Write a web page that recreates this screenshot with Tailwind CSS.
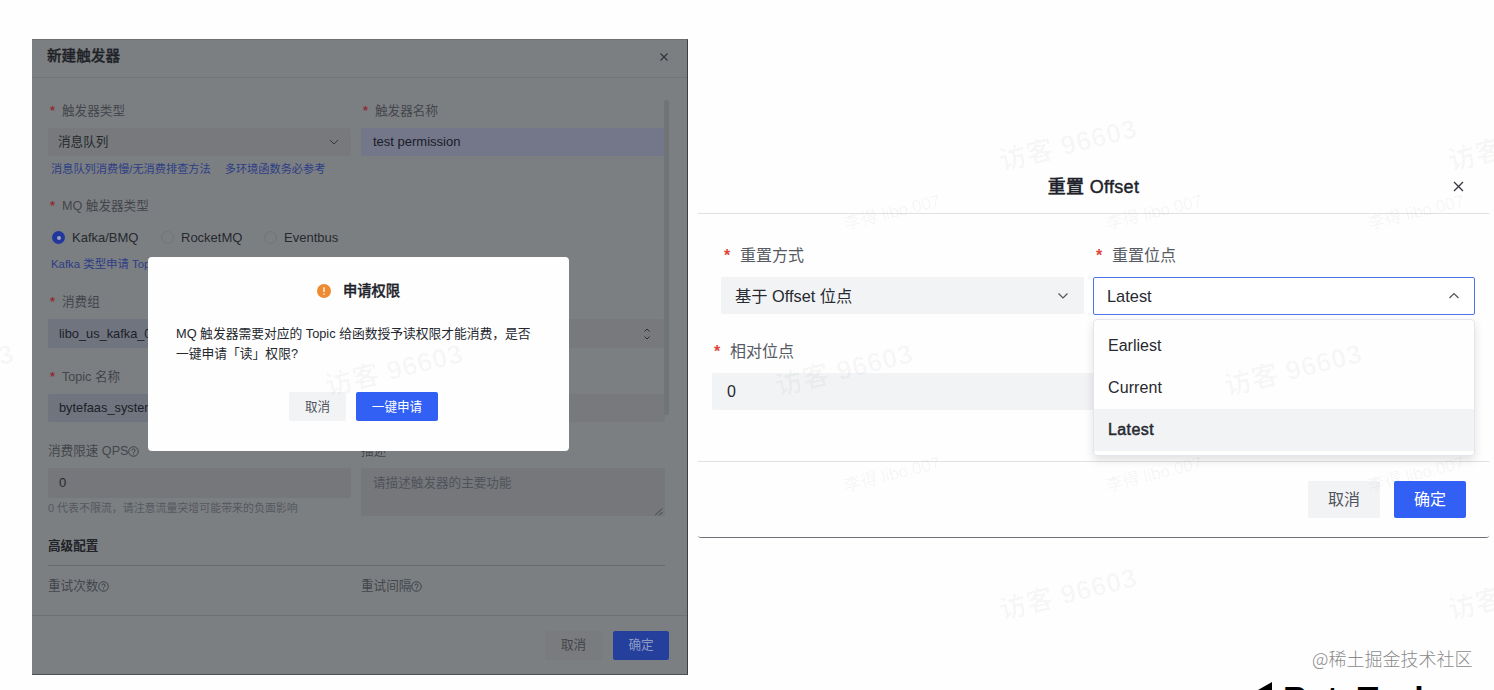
<!DOCTYPE html>
<html lang="zh">
<head>
    <meta charset="UTF-8">
    <meta name="viewport" content="width=device-width, initial-scale=1.0">
    <title>触发器配置</title>
    <script src="https://cdn.jsdelivr.net/npm/@tailwindcss/browser@4"></script>
</head>
<body class="bg-[#fefefe] font-['Liberation_Sans','Noto_Sans_CJK_SC',sans-serif]">
<div class="relative w-[1494px] h-[690px] overflow-hidden flex items-start">

    <!-- 新建触发器 -->
    <section class="relative ml-8 mt-[39px] w-[656px] h-[636px] shrink-0 flex flex-col bg-[#7c7f82] border-r border-b border-b-[#4e5054] border-r-[#3c3e42] border-t border-t-[#6d6f72] text-[12.6px] text-[#43464c]">
        <header class="h-[38px] shrink-0 pl-[15px] pr-[18px] pb-[3px] flex items-center justify-between border-b border-[#727578]">
            <h2 class="text-[14.6px] font-medium text-[#1f2227] [-webkit-text-stroke:0.35px_#1f2227]">新建触发器</h2>
            <svg class="w-2.5 h-2.5" viewBox="0 0 10 10" fill="none" stroke="#2f3237" stroke-width="1.1"><path d="M1.5 1.5l7 7M8.5 1.5l-7 7"/></svg>
        </header>

        <div class="relative h-[537px] shrink-0 pl-4 pr-[22px] pt-5 flex flex-col">
            <div class="grid grid-cols-[303px_304px] gap-x-2.5">
                <div>
                    <div class="h-6 pt-0.5 flex items-center"><span class="w-3.5 pl-0.5 font-bold text-[#8c3036]">*</span>触发器类型</div>
                    <div class="mt-1.5 h-7 pl-2.5 pr-3 flex items-center justify-between rounded-xs bg-[#77797c] text-[#26292e]">
                        <span class="pt-px">消息队列</span>
                        <svg class="w-2.5 h-2.5" viewBox="0 0 10 10" fill="none" stroke="#34373c"><path d="M1 3l4 4 4-4"/></svg>
                    </div>
                    <div class="h-[26px] pl-[3px] pt-px flex items-center gap-3.5 text-[11.2px] text-[#2c3d86]"><span>消息队列消费慢/无消费排查方法</span><span>多环境函数务必参考</span></div>
                </div>
                <div>
                    <div class="h-6 pt-0.5 flex items-center"><span class="w-3.5 pl-0.5 font-bold text-[#8c3036]">*</span>触发器名称</div>
                    <div class="mt-1.5 h-7 pl-3 flex items-center rounded-xs bg-[#74778a] text-[13px] text-[#191b28]">test permission</div>
                </div>
            </div>

            <div class="mt-[11px] h-6 pt-0.5 flex items-center"><span class="w-3.5 pl-0.5 font-bold text-[#8c3036]">*</span>MQ 触发器类型</div>
            <div class="mt-2 h-6 pl-1 pt-px flex items-center text-[13px] text-[#26292e]">
                <span class="w-[13px] h-[13px] rounded-full bg-[#21379b] flex items-center justify-center"><i class="w-1 h-1 rounded-full bg-[#9ba3bf]"></i></span>
                <span class="ml-[7px] w-[89px]">Kafka/BMQ</span>
                <span class="w-[13px] h-[13px] rounded-full border border-[#727578]"></span>
                <span class="ml-[7px] w-[83px]">RocketMQ</span>
                <span class="w-[13px] h-[13px] rounded-full border border-[#727578]"></span>
                <span class="ml-[7px]">Eventbus</span>
            </div>
            <div class="mt-1 h-[22px] pt-0.5 pl-[3px] flex items-center text-[11.4px] text-[#2c3d86]">Kafka 类型申请 Topic 权限</div>

            <div class="mt-3.5 h-6 pt-0.5 flex items-center"><span class="w-3.5 pl-0.5 font-bold text-[#8c3036]">*</span>消费组</div>
            <div class="mt-1.5 h-[29px] pl-[11px] pr-3.5 flex items-center justify-between rounded-xs bg-linear-to-r from-[#70747f] from-60% to-[#77797c] to-80% text-[12.8px] text-[#1c1e27]">
                libo_us_kafka_01
                <svg class="w-2 h-3.5" viewBox="0 0 8 14" fill="none" stroke="#2c2f34"><path d="M1.5 4.5L4 2l2.500 2.500M1.500 9.500L4 12l2.500-2.500"/></svg>
            </div>

            <div class="mt-4 h-6 pt-0.5 flex items-center"><span class="w-3.5 pl-0.5 font-bold text-[#8c3036]">*</span>Topic 名称</div>
            <div class="mt-1.5 h-7 pl-[11px] flex items-center rounded-xs bg-linear-to-r from-[#70747f] from-60% to-[#77797c] to-80% text-[12.8px] text-[#1c1e27]">bytefaas_system</div>

            <div class="mt-[17px] grid grid-cols-[303px_304px] gap-x-2.5">
                <div>
                    <div class="h-6 flex items-center">
                        消费限速 QPS
                        <svg class="w-[11px] h-[11px]" viewBox="0 0 12 12" fill="none" stroke="#383b40"><circle cx="6" cy="6" r="5.2"/><path d="M4.300 4.900a1.700 1.700 0 1 1 2.500 1.500q-.8.4-.8 1.100M6 8.300v1"/></svg>
                    </div>
                    <div class="mt-[5px] h-[30px] pl-[11px] flex items-center rounded-xs bg-[#75777a] text-[#26292e] text-[13px]">0</div>
                    <div class="h-5 pt-px flex items-center text-[10.95px] text-[#55585e]">0 代表不限流，请注意流量突增可能带来的负面影响</div>
                </div>
                <div>
                    <div class="h-6 flex items-center">描述</div>
                    <div class="relative mt-[5px] h-12 pl-3 pt-1.5 rounded-xs bg-[#75777a] text-[#50535a]">
                        请描述触发器的主要功能
                        <svg class="absolute right-0.5 bottom-0 w-2 h-2" viewBox="0 0 8 8" fill="none" stroke="#404348"><path d="M0 7.500L7 .5M4 7.500L7.500 4"/></svg>
                    </div>
                </div>
            </div>

            <h3 class="mt-4 h-8 pb-1.5 flex items-center border-b border-[#66696d] font-bold text-[#1f2227]">高级配置</h3>
            <div class="mt-[7px] grid grid-cols-[303px_304px] gap-x-2.5">
                <div class="h-6 pt-0.5 flex items-center">
                    重试次数
                    <svg class="w-[11px] h-[11px]" viewBox="0 0 12 12" fill="none" stroke="#383b40"><circle cx="6" cy="6" r="5.2"/><path d="M4.300 4.900a1.700 1.700 0 1 1 2.500 1.500q-.8.4-.8 1.100M6 8.300v1"/></svg>
                </div>
                <div class="h-6 pt-0.5 flex items-center">
                    重试间隔
                    <svg class="w-[11px] h-[11px]" viewBox="0 0 12 12" fill="none" stroke="#383b40"><circle cx="6" cy="6" r="5.2"/><path d="M4.300 4.900a1.700 1.700 0 1 1 2.500 1.500q-.8.4-.8 1.100M6 8.300v1"/></svg>
                </div>
            </div>
            <!-- 滚动条 -->
            <i class="absolute right-[18px] top-[22px] w-[5px] h-[315px] rounded-full bg-[#717477]"></i>
        </div>

        <footer class="flex-1 pr-[18px] flex items-center justify-end gap-[11px] border-t border-[#6f7275]">
            <button class="w-[57px] h-[29px] pt-px rounded-xs bg-[#797b7e] text-[#43464c]">取消</button>
            <button class="w-14 h-[29px] pt-px rounded-xs bg-[#24409c] text-[#8f9bc4]">确定</button>
        </footer>

        <!-- 申请权限弹窗 -->
        <div class="absolute left-[116px] top-[217px] w-[421px] h-[194px] rounded bg-[#fefefe] px-[28px] pt-6 flex flex-col">
            <div class="h-5 flex items-center justify-center gap-3">
                <svg class="w-3.5 h-3.5" viewBox="0 0 14 14"><circle cx="7" cy="7" r="7" fill="#ee8a30"/><path d="M7 3.200v4.800M7 9.500v1.300" stroke="#fff" stroke-width="1.300"/></svg>
                <h3 class="pt-0.5 text-[14.3px] font-medium text-[#1d2129] [-webkit-text-stroke:0.35px_#1d2129]">申请权限</h3>
            </div>
            <p class="mt-[23px] text-[12.77px] leading-5 text-[#24272d] whitespace-nowrap">MQ 触发器需要对应的 Topic 给函数授予读权限才能消费，是否<br>一键申请「读」权限?</p>
            <div class="mt-[28px] pl-[10px] flex justify-center gap-2.5">
                <button class="w-[57px] h-[29px] pt-px rounded-xs bg-[#f2f3f5] text-[#50545c]">取消</button>
                <button class="w-[82px] h-[29px] pt-px rounded-xs bg-[#3260f5] text-white">一键申请</button>
            </div>
        </div>
    </section>

    <!-- 重置 Offset -->
    <section class="relative ml-2.5 mt-[159px] w-[791px] h-[379px] shrink-0 flex flex-col rounded-b-[3px] border-b-[1.5px] border-[#6d7176] text-base text-[#565a62]">
        <header class="relative h-[55px] shrink-0 pt-0.5 flex items-center justify-center border-b border-[#dfe1e2]">
            <h2 class="text-[18px] font-medium tracking-[0.3px] text-[#1d2129] [-webkit-text-stroke:0.4px_#1d2129]">重置 Offset</h2>
            <svg class="absolute right-[25px] top-[22px] w-[11px] h-[11px]" viewBox="0 0 11 11" fill="none" stroke="#33363c" stroke-width="1.3"><path d="M1 1l9 9M10 1l-9 9"/></svg>
        </header>

        <div class="h-[247px] shrink-0 pt-[29px] pl-3.5 pr-3.5">
            <div class="pl-[9px] grid grid-cols-[363px_382px] gap-x-[9px]">
                <div>
                    <div class="h-6 pt-0.5 flex items-center"><span class="w-[19px] pl-[3px] font-bold text-[#e0453c]">*</span>重置方式</div>
                    <div class="mt-[10px] h-[37px] pl-3.5 pr-[15px] flex items-center justify-between rounded-xs bg-[#f2f3f5] text-[#26292f]">
                        <span class="pt-px text-[16.3px]">基于 Offset 位点</span>
                        <svg class="w-3 h-3" viewBox="0 0 12 12" fill="none" stroke="#4e5259" stroke-width="1.2"><path d="M1.500 3.500L6 8l4.500-4.500"/></svg>
                    </div>
                </div>
                <div class="relative">
                    <div class="h-6 pt-0.5 flex items-center"><span class="w-[19px] pl-[3px] font-bold text-[#e0453c]">*</span>重置位点</div>
                    <div class="mt-[10px] h-[38px] pl-[13px] pr-3.5 flex items-center justify-between rounded-xs border-[1.5px] border-[#4a74e8] bg-white text-[#26292f] text-[16.4px]">
                        Latest
                        <svg class="w-3 h-3" viewBox="0 0 12 12" fill="none" stroke="#4e5259" stroke-width="1.2"><path d="M1.500 8L6 3.500 10.500 8"/></svg>
                    </div>
                    <ul class="absolute z-10 left-0 top-[76px] w-[382px] h-[137px] pt-[5px] rounded border border-[#e5e6eb] bg-[#fefefe] shadow-[0_4px_10px_rgba(0,0,0,0.12)] text-[#26292f]">
                        <li class="h-[42px] px-3.5 flex items-center">Earliest</li>
                        <li class="h-[42px] px-3.5 flex items-center tracking-[0.1px]">Current</li>
                        <li class="h-[42px] px-3.5 flex items-center bg-[#f2f3f5] font-medium tracking-[0.4px] [-webkit-text-stroke:0.5px_#26292f]">Latest</li>
                    </ul>
                </div>
            </div>
            <div class="mt-6 h-6 pt-0.5 flex items-center"><span class="w-[18px] pl-0.5 font-bold text-[#e0453c]">*</span>相对位点</div>
            <div class="mt-[10px] h-[37px] w-[740px] pl-[15px] flex items-center rounded-xs bg-[#f2f3f5] text-[#26292f]">0</div>
        </div>

        <footer class="flex-1 pr-[23px] flex items-center justify-end gap-3.5 border-t border-[#dfe1e2]">
            <button class="w-[72px] h-[37px] pt-px rounded-xs bg-[#f2f3f5] text-[#50545c]">取消</button>
            <button class="w-[72px] h-[37px] pt-px rounded-xs bg-[#3260f5] text-white">确定</button>
        </footer>
    </section>

    <!-- 水印 -->
    <div class="absolute inset-0 z-20 pointer-events-none whitespace-nowrap font-bold text-black/3">
        <span class="absolute left-[998px] top-[125px] text-[27px] tracking-[0.5px] -rotate-[14deg]">访客 96603</span>
        <span class="absolute left-[1447px] top-[125px] text-[27px] tracking-[0.5px] -rotate-[14deg]">访客 96603</span>
        <span class="absolute left-[774px] top-[350px] text-[27px] tracking-[0.5px] -rotate-[14deg]">访客 96603</span>
        <span class="absolute left-[1223px] top-[350px] text-[27px] tracking-[0.5px] -rotate-[14deg]">访客 96603</span>
        <span class="absolute left-[324px] top-[350px] text-[27px] tracking-[0.5px] -rotate-[14deg]">访客 96603</span>
        <span class="absolute -left-[125px] top-[350px] text-[27px] tracking-[0.5px] -rotate-[14deg]">访客 96603</span>
        <span class="absolute left-[998px] top-[574px] text-[27px] tracking-[0.5px] -rotate-[14deg]">访客 96603</span>
        <span class="absolute left-[1447px] top-[574px] text-[27px] tracking-[0.5px] -rotate-[14deg]">访客 96603</span>
        <span class="absolute left-[843px] top-[200px] text-[17px] font-normal text-black/5 -rotate-[14deg]">李得 libo.007</span>
        <span class="absolute left-[1105px] top-[200px] text-[17px] font-normal text-black/5 -rotate-[14deg]">李得 libo.007</span>
        <span class="absolute left-[1367px] top-[200px] text-[17px] font-normal text-black/5 -rotate-[14deg]">李得 libo.007</span>
        <span class="absolute left-[843px] top-[462px] text-[17px] font-normal text-black/5 -rotate-[14deg]">李得 libo.007</span>
        <span class="absolute left-[1105px] top-[462px] text-[17px] font-normal text-black/5 -rotate-[14deg]">李得 libo.007</span>
        <span class="absolute left-[1367px] top-[462px] text-[17px] font-normal text-black/5 -rotate-[14deg]">李得 libo.007</span>
    </div>
    <div class="absolute left-[1312px] top-[646px] text-[18px] leading-6 whitespace-nowrap text-[#8b8b8b] font-['Noto_Sans_CJK_SC',sans-serif] font-light">@稀土掘金技术社区</div>
    <div class="absolute left-[1258px] top-[679px] flex items-start">
        <svg class="mt-[3px] w-3.5 h-5" viewBox="0 0 14 20"><path d="M0 8L14 0v20z" fill="#000"/></svg>
        <span class="ml-[11px] text-[34px] leading-[38px] font-bold tracking-[0.2px] text-black">ByteTech</span>
    </div>
</div>
</body>
</html>
